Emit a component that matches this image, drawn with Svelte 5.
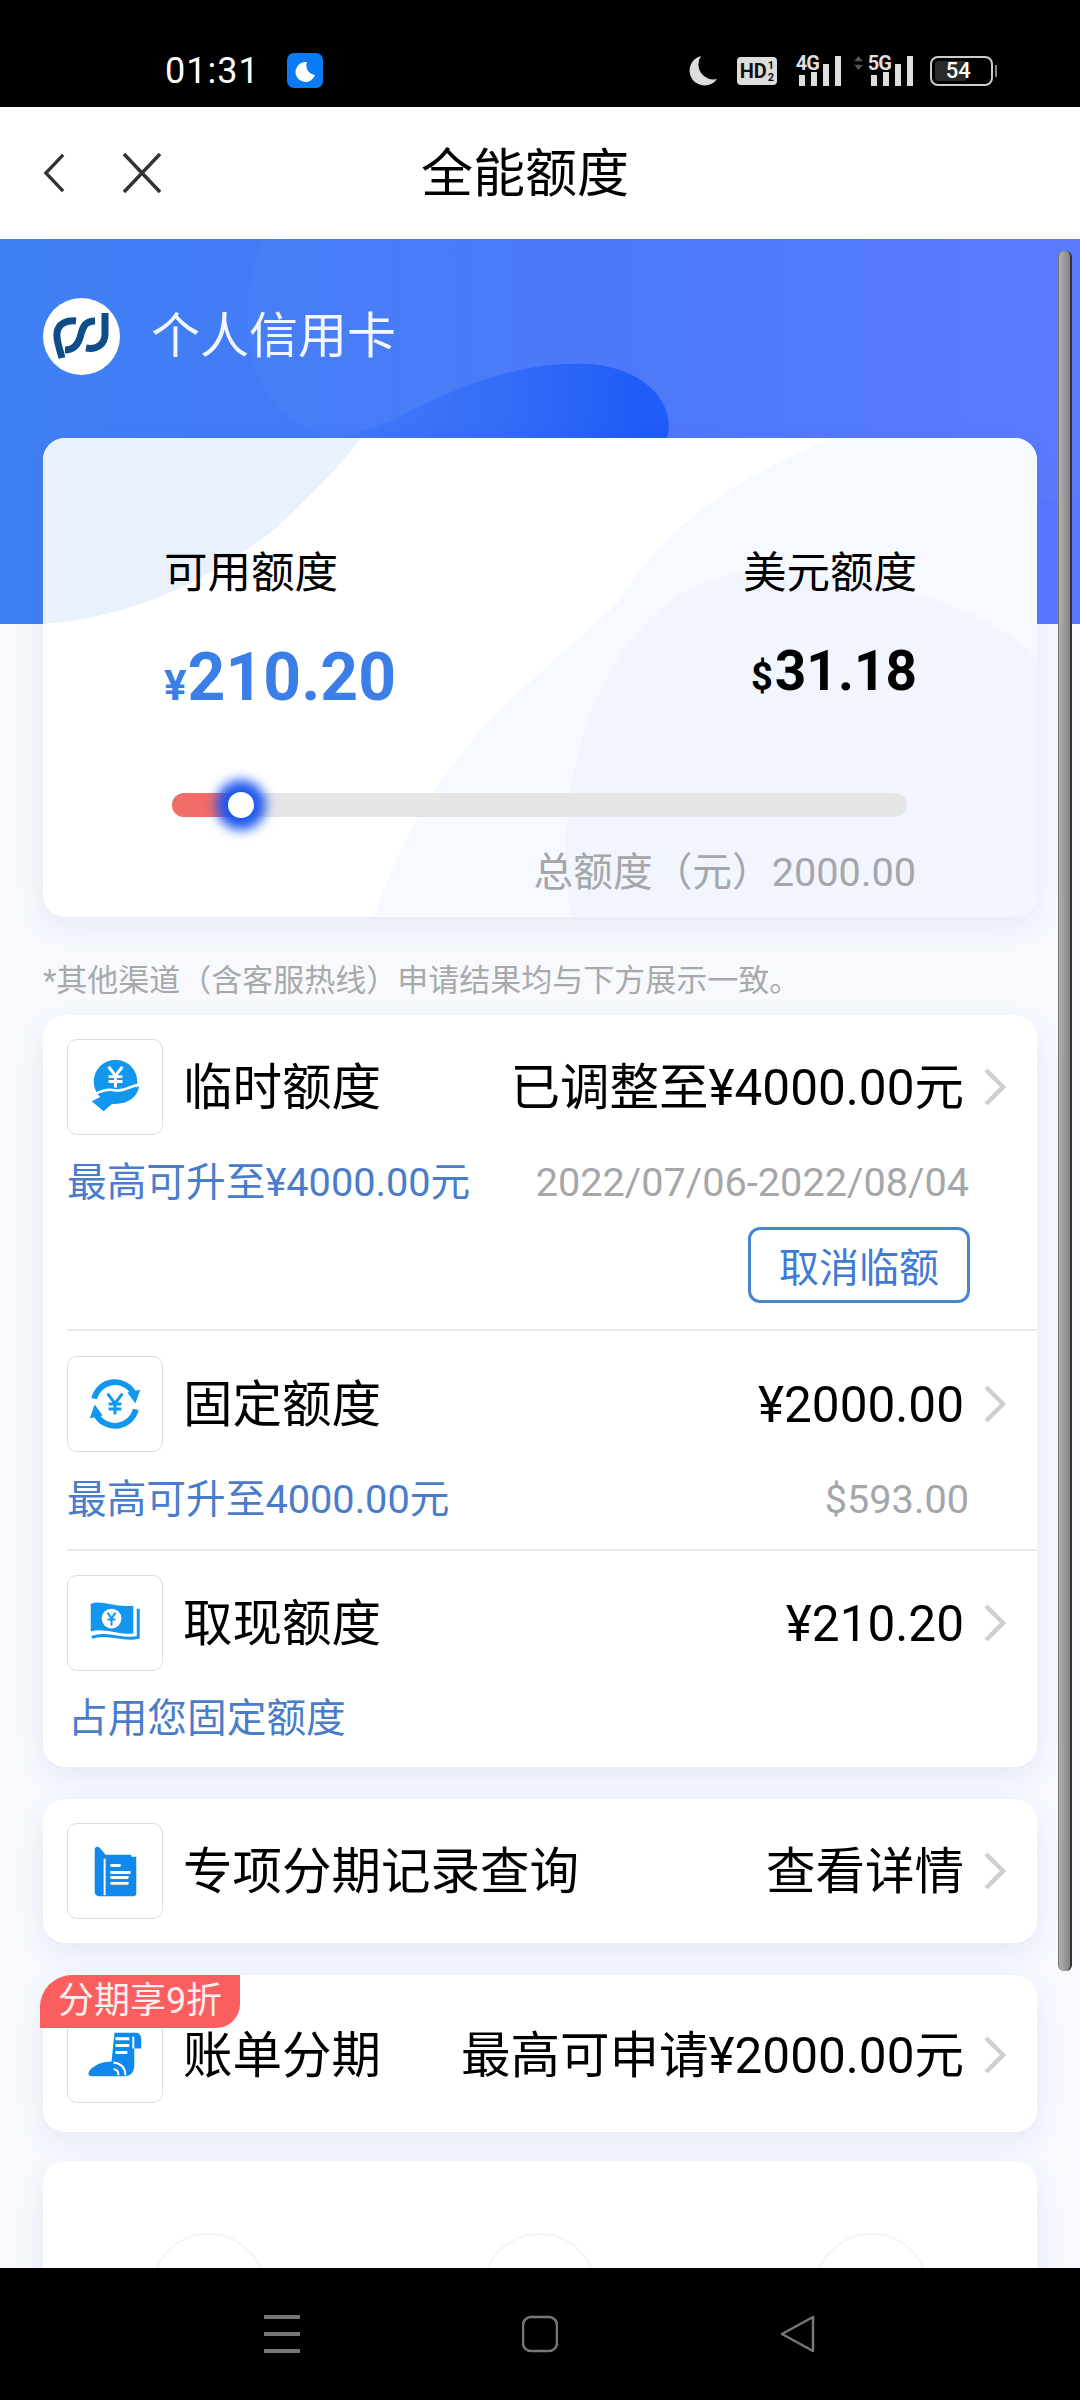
<script>
  const shortcuts = [0, 1, 2];
</script>

{#snippet chevron()}
  <svg class="chev" viewBox="0 0 23 38"><path d="M3 2 L20 19 L3 36" /></svg>
{/snippet}

<div class="phone">
  <div class="status">
    <span class="time">01:31</span>
    <span class="dnd">
      <svg viewBox="0 0 36 35"><path d="M20 9 A10 10 0 1 0 28 22 A9.5 9.5 0 0 1 20 9Z" fill="#fff" /></svg>
    </span>
    <div class="status-right">
      <svg class="moon" viewBox="0 0 30 30"><path d="M13 0 A15 15 0 1 0 29 23 A15 15 0 0 1 13 0Z" fill="#ddd" /></svg>
      <span class="hd">HD<span class="hd-sub">1<br />2</span></span>
      <span class="signal">
        <span class="net">4G</span>
        <svg viewBox="0 0 42 30"><path d="M0 19h6v11H0zM12 16h6v14h-6zM24 8h6v22h-6zM36 0h6v30h-6z" fill="#ddd" /></svg>
      </span>
      <span class="signal second">
        <svg class="arrows" viewBox="0 0 10 16"><path d="M5 0 L10 6 H0Z M5 16 L0 10 H10Z" fill="#555" /></svg>
        <span class="net">5G</span>
        <svg viewBox="0 0 42 30"><path d="M0 19h6v11H0zM12 16h6v14h-6zM24 8h6v22h-6zM36 0h6v30h-6z" fill="#ddd" /></svg>
      </span>
      <span class="battery"><span class="batt-fill"></span><span class="batt-num">54</span></span>
      <span class="batt-tip"></span>
    </div>
  </div>

  <header class="header">
    <svg class="back" viewBox="0 0 24 42"><path d="M21 2 L3 21 L21 40" /></svg>
    <svg class="close" viewBox="0 0 42 42"><path d="M3 2 L39 40 M39 2 L3 40" /></svg>
    <h1>全能额度</h1>
  </header>

  <main class="main">
    <div class="hero">
      <svg viewBox="0 0 1080 385" preserveAspectRatio="none">
        <defs>
          <linearGradient id="blob" gradientUnits="userSpaceOnUse" x1="220" x2="640" y1="0" y2="0">
            <stop offset="0" stop-color="#3f7df5" stop-opacity="0" />
            <stop offset="1" stop-color="#1f5cf8" />
          </linearGradient>
        </defs>
        <path d="M262 0 C240 60 240 130 280 170 C310 200 345 205 395 180 C470 140 530 122 590 125 C650 130 680 170 665 260 L1080 260 L1080 0Z" fill="#ffffff" fill-opacity="0.025" />
        <path d="M90 240 C200 250 300 215 395 180 C470 140 530 122 590 125 C650 130 680 170 665 205 L660 385 L60 385Z" fill="url(#blob)" />
      </svg>
    </div>

    <div class="content">
      <div class="brand">
        <span class="logo">
          <svg viewBox="0 0 77 77">
            <path d="M19 60 C16 48 13 42 14 35 C15 26 23 22 33 23" />
            <path d="M52 23 C42 23 40 29 38 36 C36 45 32 52 22 52" />
            <path d="M62 15 L62 36 C62 46 54 52 43 50" />
          </svg>
        </span>
        <span class="brand-name">个人信用卡</span>
      </div>

      <section class="card summary">
        <svg class="summary-bg" viewBox="0 0 994 479" preserveAspectRatio="none">
          <path d="M0 186 C90 180 170 140 232 91 C270 55 300 25 318 0 L0 0Z" fill="#e9f1fd" />
          <path d="M790 0 C690 40 620 90 577 162 C500 240 390 300 331 479 L994 479 L994 0Z" fill="#f6f9ff" />
          <path d="M529 479 C500 340 570 134 714 134 C830 134 950 170 994 220 L994 479Z" fill="#f1f5fe" />
        </svg>
        <div class="amounts">
          <div>
            <div class="label">可用额度</div>
            <div class="avail"><span class="cur">¥</span>210.20</div>
          </div>
          <div class="usd-col">
            <div class="label">美元额度</div>
            <div class="usd"><span class="cur">$</span>31.18</div>
          </div>
        </div>
        <div class="track">
          <div class="fill"></div>
          <div class="knob"></div>
        </div>
        <div class="total">总额度（元）2000.00</div>
      </section>

      <p class="note">*其他渠道（含客服热线）申请结果均与下方展示一致。</p>

      <section class="card list">
        <div class="row first">
          <div class="head">
            <span class="ico">
              <svg viewBox="0 0 95 95">
                <circle cx="48" cy="42" r="22" fill="#1296ee" />
                <path d="M24 62 L44 52 C52 55 60 51 72 47 C70 56 64 62 54 64 L44 65 L36 72Z" fill="#1296ee" />
                <path d="M26 55 C36 50 42 49 48 51 C56 52 62 47 72 45" fill="none" stroke="#fff" stroke-width="2.5" />
                <path d="M41 27 L48 36 L55 27 M48 36 V48 M41 37 H55 M41 42 H55" fill="none" stroke="#fff" stroke-width="3" />
              </svg>
            </span>
            <span class="title">临时额度</span>
            <span class="val">已调整至¥4000.00元</span>
            {@render chevron()}
          </div>
          <div class="sub">
            <span class="hint">最高可升至¥4000.00元</span>
            <span class="muted">2022/07/06-2022/08/04</span>
          </div>
          <div class="actions"><button class="cancel">取消临额</button></div>
        </div>

        <div class="row second">
          <div class="head">
            <span class="ico">
              <svg viewBox="0 0 95 95">
                <path d="M26.5 42 A21.5 21.5 0 0 1 67 38" fill="none" stroke="#1296ee" stroke-width="6" />
                <path d="M73 33 L60 36 L68 47Z" fill="#1296ee" />
                <path d="M68.5 53 A21.5 21.5 0 0 1 28 57" fill="none" stroke="#1296ee" stroke-width="6" />
                <path d="M22 62 L35 59 L27 48Z" fill="#1296ee" />
                <path d="M40 37 L47.5 47 L55 37 M47.5 47 V58 M41 47.5 H54 M41 52.5 H54" fill="none" stroke="#1296ee" stroke-width="3" />
              </svg>
            </span>
            <span class="title">固定额度</span>
            <span class="val">¥2000.00</span>
            {@render chevron()}
          </div>
          <div class="sub">
            <span class="hint">最高可升至4000.00元</span>
            <span class="muted">$593.00</span>
          </div>
        </div>

        <div class="row third">
          <div class="head">
            <span class="ico">
              <svg viewBox="0 0 95 95">
                <path d="M23 28 C35 24 45 32 66 30 L66 58 C50 60 38 52 23 56Z" fill="#1296ee" />
                <path d="M71 33 V62 C55 66 40 56 24 62" fill="none" stroke="#1296ee" stroke-width="3" />
                <circle cx="44" cy="43" r="10" fill="#fff" />
                <path d="M40 37 L44 43 L48 37 M44 43 V50 M40 44 H48" fill="none" stroke="#1296ee" stroke-width="2" />
              </svg>
            </span>
            <span class="title">取现额度</span>
            <span class="val">¥210.20</span>
            {@render chevron()}
          </div>
          <div class="sub"><span class="hint occupy">占用您固定额度</span></div>
        </div>
      </section>

      <section class="card single records">
        <div class="head">
          <span class="ico">
            <svg viewBox="0 0 95 95">
              <path d="M27 26 C27 23 30 22 32 24 L38 31 H64 V33 H69 V70 C69 72 68 73 66 73 H31 C29 73 27 71 27 69Z" fill="#1189ec" />
              <path d="M37 35 V72" stroke="#fff" stroke-width="2" />
              <path d="M44 42 H52 M44 49 H62 M44 54 H60 M44 60 H60" stroke="#fff" stroke-width="3" stroke-linecap="round" />
            </svg>
          </span>
          <span class="title">专项分期记录查询</span>
          <span class="val">查看详情</span>
          {@render chevron()}
        </div>
      </section>

      <section class="card single bill">
        <span class="badge">分期享9折</span>
        <div class="head">
          <span class="ico">
            <svg viewBox="0 0 95 95">
              <path d="M47 25 H69 C72 25 74 28 74 31 V41 L67 41 V60 C66 66 62 69 58 69 H24 C20 69 20 66 22 63 C26 58 34 54 44 54Z" fill="#1189ec" />
              <path d="M66 29 V41" stroke="#fff" stroke-width="2" />
              <path d="M48 31 H62 M48 38 H62 M48 45 H60" stroke="#fff" stroke-width="3" />
              <path d="M46 55 C54 56 58 61 58 68 M46 62 C49 62 51 64 51 68" fill="none" stroke="#fff" stroke-width="2" />
            </svg>
          </span>
          <span class="title">账单分期</span>
          <span class="val">最高可申请¥2000.00元</span>
          {@render chevron()}
        </div>
      </section>

      <section class="card shortcuts">
        {#each shortcuts as s (s)}
          <div class="slot"><span class="ring"></span></div>
        {/each}
      </section>
    </div>

    <div class="scrollbar"></div>
  </main>

  <nav class="nav">
    <svg class="nav-ico menu" viewBox="0 0 36 38"><path d="M0 2 H36 M0 19 H36 M0 36 H36" /></svg>
    <svg class="nav-ico home" viewBox="0 0 36 38"><rect x="1" y="2" width="34" height="34" rx="8" /></svg>
    <svg class="nav-ico tri" viewBox="0 0 36 38"><path d="M33 2 L2 19 L33 36Z" stroke-linejoin="round" /></svg>
  </nav>
</div>

<style>
  :global(body) {
    margin: 0;
    background: #000;
  }

  .phone {
    width: 1080px;
    height: 2400px;
    display: flex;
    flex-direction: column;
    overflow: hidden;
    font-family: Roboto, "Noto Sans CJK SC", sans-serif;
    color: #000;
  }

  .status {
    height: 107px;
    flex: none;
    background: #000;
    display: flex;
    align-items: center;
    padding: 34px 0 0 165px;
    box-sizing: border-box;
    color: #fff;
  }

  .time {
    font-size: 36px;
    letter-spacing: 1px;
    line-height: 40px;
  }

  .dnd {
    width: 36px;
    height: 35px;
    margin-left: 27px;
    background: #0a7bf5;
    border-radius: 7px;
  }

  .dnd svg {
    display: block;
  }

  .status-right {
    position: relative;
    display: flex;
    align-items: center;
    margin-left: 365px;
  }

  .moon {
    width: 30px;
    height: 30px;
  }

  .hd {
    margin-left: 19px;
    width: 40px;
    height: 28px;
    background: #ddd;
    border-radius: 4px;
    color: #111;
    font-size: 20px;
    font-weight: 700;
    line-height: 28px;
    display: flex;
    padding-left: 3px;
    box-sizing: border-box;
  }

  .hd-sub {
    font-size: 11px;
    line-height: 12px;
    margin-left: 1px;
    padding-top: 3px;
  }

  .signal {
    position: relative;
    margin-left: 22px;
    width: 42px;
    height: 30px;
    display: block;
  }

  .signal.second {
    margin-left: 30px;
  }

  .signal svg {
    position: absolute;
    left: 0;
    bottom: 0;
    width: 42px;
    height: 30px;
  }

  .signal svg.arrows {
    left: -17px;
    top: 0;
    width: 9px;
    height: 14px;
  }

  .net {
    position: absolute;
    left: -3px;
    top: -3px;
    font-size: 20px;
    line-height: 20px;
    font-weight: 700;
    letter-spacing: -1px;
    color: #ddd;
  }

  .battery {
    position: relative;
    margin-left: 17px;
    width: 63px;
    height: 30px;
    box-sizing: border-box;
    border: 2px solid #ccc;
    border-radius: 8px;
    display: block;
  }

  .batt-fill {
    position: absolute;
    left: 3px;
    top: 3px;
    bottom: 3px;
    width: 32px;
    background: #2a2a2a;
    border-radius: 3px;
  }

  .batt-num {
    position: absolute;
    left: 14px;
    top: 0;
    font-size: 22px;
    line-height: 26px;
    font-weight: 500;
    color: #fff;
  }

  .batt-tip {
    margin-left: 2px;
    width: 2px;
    height: 12px;
    background: #888;
  }

  .header {
    height: 132px;
    flex: none;
    background: #fff;
    display: flex;
    align-items: center;
    padding-left: 43px;
    box-sizing: border-box;
  }

  .header svg {
    fill: none;
    stroke: #333;
    stroke-width: 3.5;
  }

  .back {
    width: 23px;
    height: 42px;
  }

  .close {
    width: 42px;
    height: 42px;
    margin-left: 55px;
  }

  .header h1 {
    margin: 3px 0 0 258px;
    font-size: 52px;
    font-weight: 400;
    line-height: 70px;
  }

  .main {
    position: relative;
    flex: 1;
    overflow: hidden;
    background: #f7f9ff;
  }

  .hero {
    position: absolute;
    left: 0;
    top: 0;
    right: 0;
    height: 385px;
    background: linear-gradient(90deg, #3f80f4 0%, #4776f9 55%, #5878ff 100%);
  }

  .hero svg {
    width: 100%;
    height: 100%;
    display: block;
  }

  .content {
    position: relative;
    padding: 59px 43px 0;
  }

  .brand {
    display: flex;
    align-items: center;
    height: 77px;
    margin-bottom: 63px;
  }

  .logo {
    width: 77px;
    height: 77px;
    border-radius: 50%;
    background: #fff;
  }

  .logo svg {
    display: block;
    fill: none;
    stroke: #0f4c8a;
    stroke-width: 7;
  }

  .brand-name {
    margin-left: 31px;
    font-size: 49px;
    line-height: 60px;
    color: #f2f6ff;
  }

  .card {
    background: #fff;
    border-radius: 22px;
    box-shadow: 0 10px 30px rgba(50, 70, 130, 0.09);
    position: relative;
  }

  .summary {
    height: 479px;
    box-sizing: border-box;
    padding-top: 106px;
    overflow: hidden;
  }

  .summary-bg {
    position: absolute;
    inset: 0;
    width: 100%;
    height: 100%;
  }

  .amounts {
    position: relative;
    display: flex;
    justify-content: space-between;
    padding: 0 120px 0 121px;
  }

  .usd-col {
    text-align: right;
  }

  .label {
    font-size: 43.5px;
    line-height: 60px;
  }

  .avail {
    margin-top: 34px;
    font-size: 66px;
    line-height: 80px;
    font-weight: 700;
    color: #3b7ee8;
  }

  .avail .cur {
    font-size: 42px;
    margin-right: 1px;
  }

  .usd {
    margin-top: 27px;
    font-size: 55px;
    line-height: 80px;
    font-weight: 700;
  }

  .usd .cur {
    font-size: 38px;
    margin-right: 2px;
  }

  .track {
    position: relative;
    margin: 67px 0 0 129px;
    width: 735px;
    height: 24px;
    background: #e6e6e6;
    border-radius: 12px;
  }

  .fill {
    width: 70px;
    height: 100%;
    background: #f26d68;
    border-radius: 12px 0 0 12px;
  }

  .knob {
    position: absolute;
    left: 56px;
    top: -1px;
    width: 26px;
    height: 26px;
    background: #fff;
    border-radius: 50%;
    box-shadow: 0 0 12px 12px #1d57ee;
  }

  .total {
    position: relative;
    margin-top: 31px;
    padding-right: 121px;
    text-align: right;
    font-size: 39.7px;
    line-height: 50px;
    color: #a4a6a9;
  }

  .note {
    margin: 44px 0 14px;
    font-size: 31px;
    line-height: 40px;
    color: #a8a9ab;
  }

  .list {
    height: 752px;
    margin-bottom: 32px;
  }

  .row {
    padding-left: 24px;
  }

  .row.first,
  .row.second {
    position: relative;
  }

  .row.first::after,
  .row.second::after {
    content: "";
    position: absolute;
    left: 24px;
    right: 0;
    bottom: 0;
    height: 2px;
    background: #e9e9e9;
  }

  .row.first {
    padding-top: 24px;
    height: 316px;
    box-sizing: border-box;
  }

  .row.second {
    padding-top: 25px;
    height: 220px;
    box-sizing: border-box;
  }

  .row.third {
    padding-top: 24px;
  }

  .head {
    display: flex;
    align-items: center;
    height: 96px;
    padding-right: 31px;
  }

  .ico {
    flex: none;
    width: 96px;
    height: 96px;
    box-sizing: border-box;
    border: 1px solid #dcdcdc;
    border-radius: 10px;
    background: #fff;
  }

  .ico svg {
    display: block;
    width: 94px;
    height: 94px;
  }

  .title {
    margin: 2px 0 0 20px;
    font-size: 49.5px;
    line-height: 60px;
  }

  .val {
    margin: 2px 0 0 auto;
    font-size: 49.5px;
    line-height: 60px;
  }

  .chev {
    width: 23px;
    height: 38px;
    margin-left: 19px;
    fill: none;
    stroke: #cfcfcf;
    stroke-width: 4.5;
    flex: none;
  }

  .sub {
    display: flex;
    justify-content: space-between;
    align-items: center;
    margin-top: 23px;
    height: 50px;
    padding-right: 68px;
  }

  .hint {
    font-size: 39.7px;
    color: #4a7dc9;
    line-height: 50px;
  }

  .occupy {
    margin-left: 1px;
  }

  .muted {
    font-size: 39.7px;
    color: #a4a6a9;
    line-height: 50px;
  }

  .actions {
    display: flex;
    justify-content: flex-end;
    margin-top: 19px;
    padding-right: 67px;
  }

  .cancel {
    width: 222px;
    height: 76px;
    padding: 0;
    background: #fff;
    border: 3px solid #4a86d0;
    border-radius: 12px;
    font-family: inherit;
    font-size: 40px;
    color: #3f7bd4;
  }

  .single {
    box-sizing: border-box;
    padding-left: 24px;
  }

  .records {
    height: 144px;
    padding-top: 24px;
    margin-bottom: 32px;
  }

  .bill {
    height: 157px;
    padding-top: 32px;
    margin-bottom: 29px;
  }

  .badge {
    position: absolute;
    left: -3px;
    top: 0;
    width: 200px;
    height: 53px;
    background: #fb5e5e;
    border-radius: 32px 0 24px 0;
    color: #ffeeee;
    font-size: 36px;
    line-height: 53px;
    text-align: center;
    z-index: 1;
  }

  .shortcuts {
    display: grid;
    grid-template-columns: repeat(3, 1fr);
    padding-top: 72px;
    height: 300px;
    box-sizing: border-box;
  }

  .slot {
    display: flex;
    justify-content: center;
  }

  .ring {
    width: 115px;
    height: 115px;
    box-sizing: border-box;
    border: 2px solid #f5f5f5;
    border-radius: 50%;
  }

  .scrollbar {
    position: absolute;
    left: 1058px;
    top: 12px;
    width: 14px;
    height: 1720px;
    box-sizing: border-box;
    background: linear-gradient(90deg, #b0b0b0, #858585);
    border-left: 1px solid #777;
    border-right: 2px solid #333;
    border-radius: 6px;
  }

  .nav {
    height: 132px;
    flex: none;
    background: #000;
    position: relative;
    z-index: 2;
    display: flex;
    align-items: center;
    padding: 0 0 0 264px;
    box-sizing: border-box;
  }

  .nav-ico {
    width: 36px;
    height: 38px;
    fill: none;
    stroke: #777;
    stroke-width: 2.5;
  }

  .menu {
    stroke-width: 4;
  }

  .home {
    margin-left: 222px;
  }

  .tri {
    margin-left: 222px;
  }
</style>
